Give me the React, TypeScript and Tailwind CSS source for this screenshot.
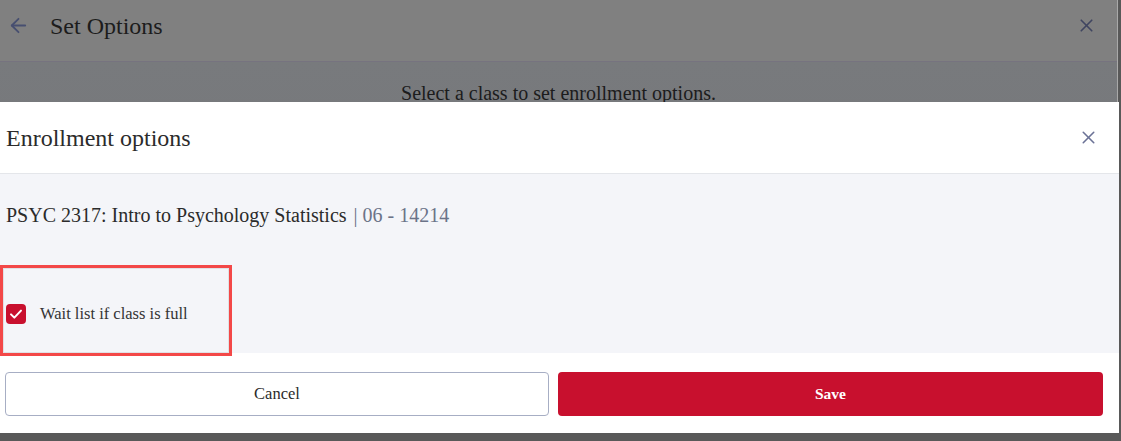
import React from 'react';
import { ArrowLeft, X } from 'lucide-react';

const App: React.FC = () => {
  return (
    <div className="relative h-[441px] w-[1121px] overflow-hidden bg-[#595959] font-['Liberation_Serif','Times_New_Roman',serif]">
      {/* page behind the dimmed overlay */}
      <div className="flex h-[433px] w-[1118px] flex-col border-r border-[#a9a9a9]">
        <div className="flex h-[62px] items-center justify-between border-b border-[#76737f] bg-[#808080] pb-[10px] pl-[7px] pr-[20px]">
          <div className="flex items-center">
            <ArrowLeft size={23} strokeWidth={1.9} className="text-[#474f70]" />
            <span className="ml-[20px] text-[24px] text-[#1c1c1c]">Set Options</span>
          </div>
          <X size={21} strokeWidth={1.9} className="text-[#3f4560]" />
        </div>
        <div className="flex-1 bg-gradient-to-b from-[#787a7d] to-[#727376] pt-[16px] text-center text-[20px] text-[#1c1c1c]">
          Select a class to set enrollment options.
        </div>
      </div>

      {/* modal */}
      <div className="absolute left-0 top-[102px] flex w-[1119px] flex-col bg-white">
        <div className="flex h-[72px] items-center justify-between border-b border-[#e4e6ea] pl-[6px] pr-[20px]">
          <h2 className="text-[24px] text-[#2b2b2b]">Enrollment options</h2>
          <X size={21} strokeWidth={1.75} className="text-[#6b7296]" />
        </div>
        <div className="flex h-[179px] flex-col bg-[#f4f5f9] pl-[6px]">
          <p className="mt-[26px] text-[20px] text-[#2b2b2b]">
            PSYC 2317: Intro to Psychology Statistics <span className="ml-[2px] text-[#6b7388]">| 06 - 14214</span>
          </p>
          <label className="mt-[72px] flex items-center">
            <span className="flex h-[20px] w-[20px] items-center justify-center rounded-[4px] bg-[#c8102e]">
              <svg width="16" height="16" viewBox="0 0 24 24" fill="none" stroke="white" strokeWidth="3" strokeLinecap="round" strokeLinejoin="round">
                <path d="M4.5 12.5l5 5L19.5 7" />
              </svg>
            </span>
            <span className="ml-[14px] text-[16.5px] text-[#333]">Wait list if class is full</span>
          </label>
        </div>
        <div className="flex h-[80px] gap-[9px] pl-[5px] pr-[16px] pt-[19px]">
          <button className="h-[44px] w-[544px] rounded-[4px] border border-[#a7aec4] bg-white text-[16.5px] text-[#2b2b2b]">
            Cancel
          </button>
          <button className="h-[44px] w-[545px] rounded-[4px] bg-[#c8102e] text-[15.5px] font-bold text-white">
            Save
          </button>
        </div>
      </div>

      {/* highlight annotation */}
      <div className="absolute left-0 top-[265px] h-[91px] w-[232px] border-[3px] border-[#f34848] shadow-[inset_0_0_0_1px_rgba(0,0,0,0.08)]" />
    </div>
  );
};

export default App;
